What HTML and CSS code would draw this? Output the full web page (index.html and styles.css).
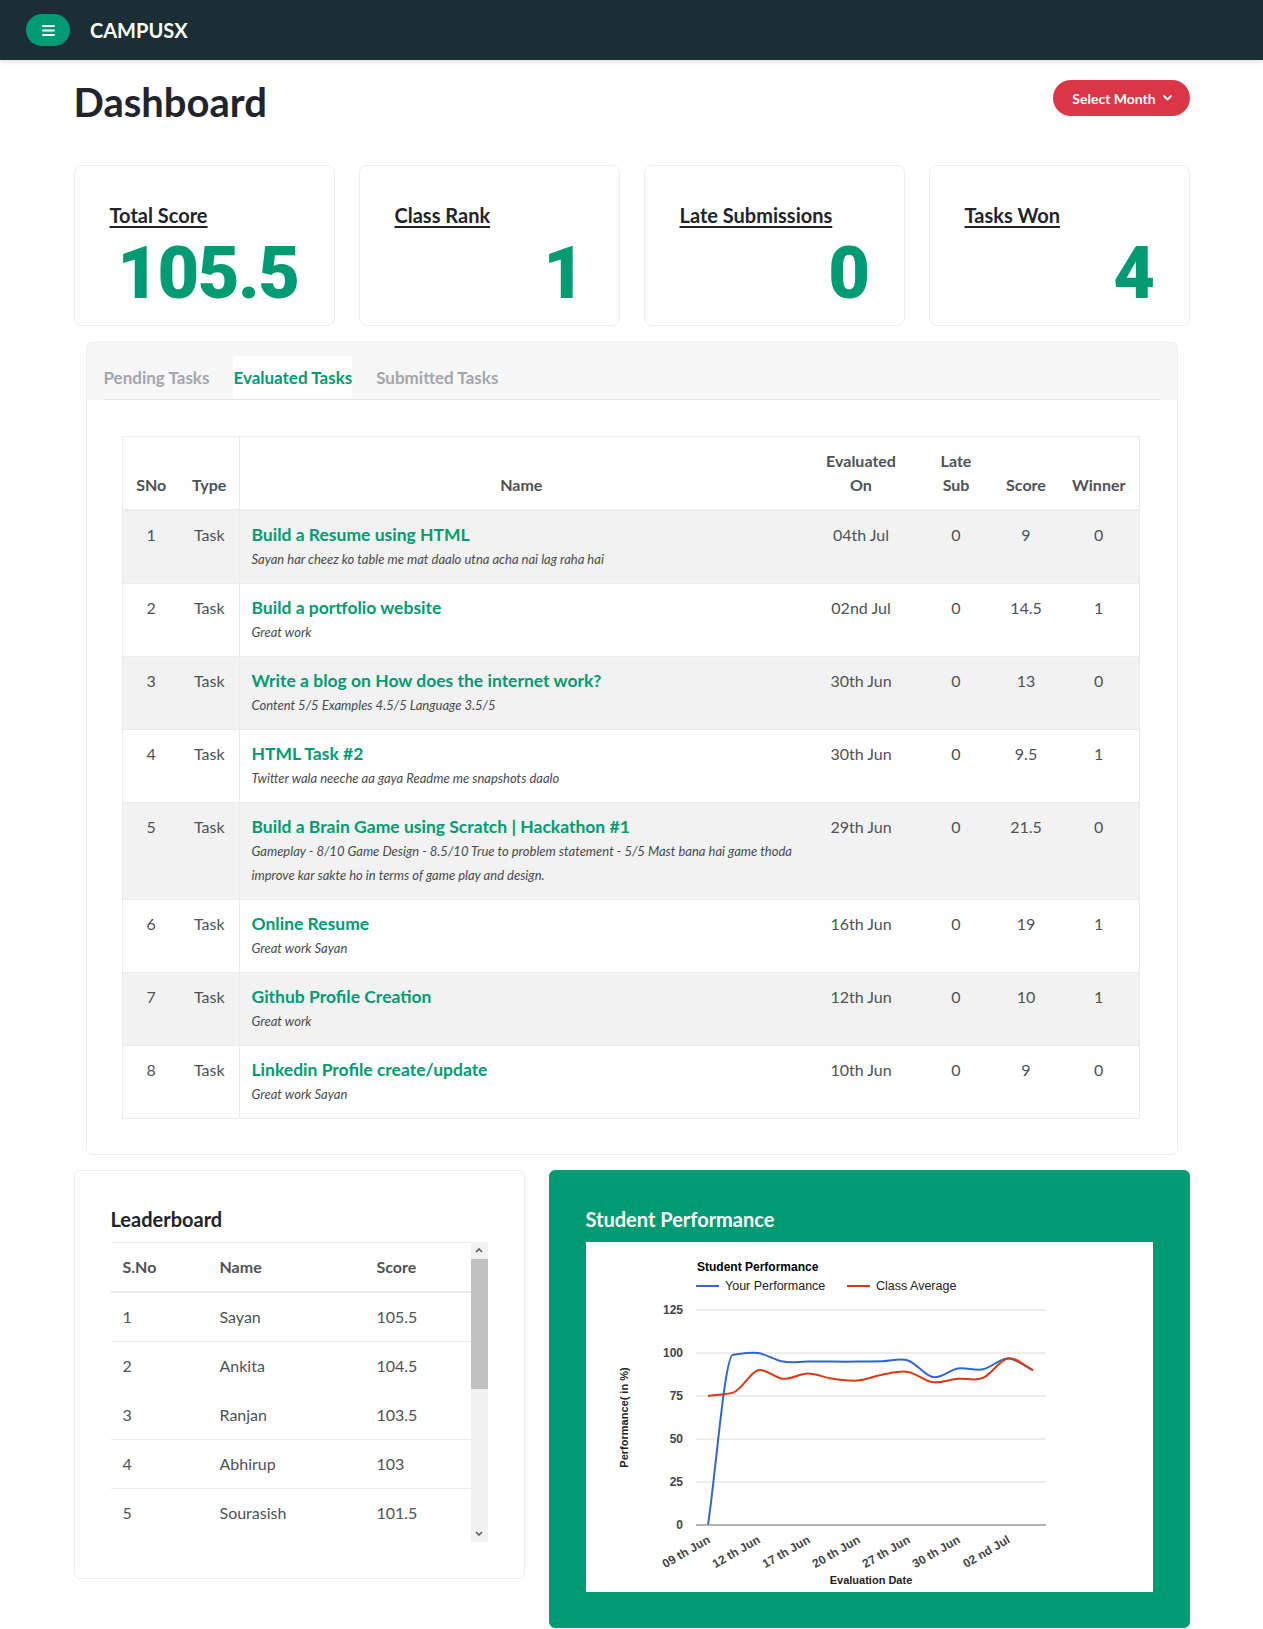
FILE: index.html
```html
<!DOCTYPE html>
<html lang="en">
<head>
<meta charset="utf-8">
<title>CampusX Dashboard</title>
<link rel="stylesheet" href="styles.css">
</head>
<body>
<nav class="topbar">
  <button class="menu-btn" aria-label="Menu">
    <svg width="13" height="11" viewBox="0 0 13 11"><rect x="0" y="0" width="13" height="2" rx="1" fill="#fff"/><rect x="0" y="4.5" width="13" height="2" rx="1" fill="#fff"/><rect x="0" y="9" width="13" height="2" rx="1" fill="#fff"/></svg>
  </button>
  <span class="brand">CAMPUSX</span>
</nav>

<main class="container">
  <div class="page-head">
    <h1 class="page-title">Dashboard</h1>
    <button class="month-btn">Select Month
      <svg width="9" height="6" viewBox="0 0 9 6"><polyline points="1,1 4.5,4.5 8,1" fill="none" stroke="#fff" stroke-width="1.8" stroke-linecap="round" stroke-linejoin="round"/></svg>
    </button>
  </div>

  <div class="stats">
    <div class="stat-card"><h5 class="stat-label">Total Score</h5><div class="stat-value">105.5</div></div>
    <div class="stat-card"><h5 class="stat-label">Class Rank</h5><div class="stat-value">1</div></div>
    <div class="stat-card"><h5 class="stat-label">Late Submissions</h5><div class="stat-value">0</div></div>
    <div class="stat-card"><h5 class="stat-label">Tasks Won</h5><div class="stat-value">4</div></div>
  </div>

  <section class="tasks-panel">
    <div class="tabs">
      <div class="tab-list">
        <span class="tab">Pending Tasks</span>
        <span class="tab active">Evaluated Tasks</span>
        <span class="tab">Submitted Tasks</span>
      </div>
    </div>
    <div class="panel-body">
      <table class="tasks">
        <colgroup>
          <col class="w-sno"><col class="w-type"><col class="w-name"><col class="w-eval"><col class="w-late"><col class="w-score"><col class="w-win">
        </colgroup>
        <thead>
          <tr><th>SNo</th><th class="col-type">Type</th><th>Name</th><th>Evaluated<br>On</th><th>Late<br>Sub</th><th>Score</th><th>Winner</th></tr>
        </thead>
        <tbody>
          <tr><td>1</td><td class="col-type">Task</td><td class="name"><div class="task-title">Build a Resume using HTML</div><div class="task-note">Sayan har cheez ko table me mat daalo utna acha nai lag raha hai</div></td><td>04th Jul</td><td>0</td><td>9</td><td>0</td></tr>
          <tr><td>2</td><td class="col-type">Task</td><td class="name"><div class="task-title">Build a portfolio website</div><div class="task-note">Great work</div></td><td>02nd Jul</td><td>0</td><td>14.5</td><td>1</td></tr>
          <tr><td>3</td><td class="col-type">Task</td><td class="name"><div class="task-title">Write a blog on How does the internet work?</div><div class="task-note">Content 5/5 Examples 4.5/5 Language 3.5/5</div></td><td>30th Jun</td><td>0</td><td>13</td><td>0</td></tr>
          <tr><td>4</td><td class="col-type">Task</td><td class="name"><div class="task-title">HTML Task #2</div><div class="task-note">Twitter wala neeche aa gaya Readme me snapshots daalo</div></td><td>30th Jun</td><td>0</td><td>9.5</td><td>1</td></tr>
          <tr><td>5</td><td class="col-type">Task</td><td class="name"><div class="task-title">Build a Brain Game using Scratch | Hackathon #1</div><div class="task-note">Gameplay - 8/10 Game Design - 8.5/10 True to problem statement - 5/5 Mast bana hai game thoda improve kar sakte ho in terms of game play and design.</div></td><td>29th Jun</td><td>0</td><td>21.5</td><td>0</td></tr>
          <tr><td>6</td><td class="col-type">Task</td><td class="name"><div class="task-title">Online Resume</div><div class="task-note">Great work Sayan</div></td><td>16th Jun</td><td>0</td><td>19</td><td>1</td></tr>
          <tr><td>7</td><td class="col-type">Task</td><td class="name"><div class="task-title">Github Profile Creation</div><div class="task-note">Great work</div></td><td>12th Jun</td><td>0</td><td>10</td><td>1</td></tr>
          <tr><td>8</td><td class="col-type">Task</td><td class="name"><div class="task-title">Linkedin Profile create/update</div><div class="task-note">Great work Sayan</div></td><td>10th Jun</td><td>0</td><td>9</td><td>0</td></tr>
        </tbody>
      </table>
    </div>
  </section>

  <div class="bottom-row">
    <section class="leader-card">
      <h5 class="card-title">Leaderboard</h5>
      <div class="leader-scroll">
        <div class="leader-wrap">
          <table class="leader-table">
            <colgroup><col class="lw-1"><col class="lw-2"><col></colgroup>
            <thead><tr><th>S.No</th><th>Name</th><th>Score</th></tr></thead>
            <tbody>
              <tr><td>1</td><td>Sayan</td><td>105.5</td></tr>
              <tr class="no-line"><td>2</td><td>Ankita</td><td>104.5</td></tr>
              <tr><td>3</td><td>Ranjan</td><td>103.5</td></tr>
              <tr><td>4</td><td>Abhirup</td><td>103</td></tr>
              <tr class="no-line"><td>5</td><td>Sourasish</td><td>101.5</td></tr>
            </tbody>
          </table>
        </div>
        <div class="scrollbar">
          <div class="sb-btn"><svg width="8" height="5" viewBox="0 0 8 5"><polyline points="1,4 4,1 7,4" fill="none" stroke="#505050" stroke-width="1.4"/></svg></div>
          <div class="sb-thumb"></div>
          <div class="sb-track"></div>
          <div class="sb-btn"><svg width="8" height="5" viewBox="0 0 8 5"><polyline points="1,1 4,4 7,1" fill="none" stroke="#505050" stroke-width="1.4"/></svg></div>
        </div>
      </div>
    </section>

    <section class="perf-card">
      <h5 class="card-title">Student Performance</h5>
      <div class="chart">
        <svg width="567" height="350" viewBox="0 0 567 350">
          <text class="ch-title" x="111" y="29">Student Performance</text>
          <line x1="110" y1="44" x2="133" y2="44" stroke="#3366cc" stroke-width="2"/>
          <text class="ch-legend" x="139" y="48">Your Performance</text>
          <line x1="261" y1="44" x2="284" y2="44" stroke="#dc3912" stroke-width="2"/>
          <text class="ch-legend" x="290" y="48">Class Average</text>

          <g stroke="#dcdcdc" stroke-width="1">
            <line x1="110" y1="68" x2="460" y2="68"/>
            <line x1="110" y1="111" x2="460" y2="111"/>
            <line x1="110" y1="154" x2="460" y2="154"/>
            <line x1="110" y1="197" x2="460" y2="197"/>
            <line x1="110" y1="240" x2="460" y2="240"/>
          </g>

          <g class="ch-axis" text-anchor="end">
            <text x="97" y="72">125</text>
            <text x="97" y="115">100</text>
            <text x="97" y="158">75</text>
            <text x="97" y="201">50</text>
            <text x="97" y="244">25</text>
            <text x="97" y="287">0</text>
          </g>

          <path d="M122,283 C130.3,226.2 138.7,113.7 147,112.7 C155.3,111.7 163.7,109.85 172,111 C180.3,112.15 188.7,118.17 197,119.6 C205.3,121.03 213.7,119.6 222,119.6 C230.3,119.6 238.7,119.6 247,119.6 C255.3,119.6 263.7,119.67 272,119.6 C280.3,119.53 288.7,119.38 297,119.2 C305.3,119.02 313.7,115.85 322,118.5 C330.3,121.15 338.7,133.77 347,135.1 C355.3,136.43 363.7,127.8 372,126.5 C380.3,125.2 388.7,128.98 397,127.3 C405.3,125.62 413.7,116.25 422,116.4 C430.3,116.55 438.7,124.27 447,128.2" fill="none" stroke="#3366cc" stroke-width="2"/>
          <path d="M122,154 C130.3,152.87 138.7,152.6 147,150.6 C155.3,148.6 163.7,130.5 172,128.2 C180.3,125.9 188.7,136.23 197,136.8 C205.3,137.37 213.7,131.6 222,131.6 C230.3,131.6 238.7,135.65 247,136.8 C255.3,137.95 263.7,139.22 272,138.5 C280.3,137.78 288.7,133.93 297,132.5 C305.3,131.07 313.7,128.62 322,129.9 C330.3,131.18 338.7,139.05 347,140.2 C355.3,141.35 363.7,137.52 372,136.8 C380.3,136.08 388.7,139.3 397,135.9 C405.3,132.5 413.7,117.68 422,116.4 C430.3,115.12 438.7,124.27 447,128.2" fill="none" stroke="#dc3912" stroke-width="2"/>

          <line x1="110" y1="283" x2="460" y2="283" stroke="#9a9a9a" stroke-width="1.6"/>

          <g class="ch-axis" text-anchor="end">
            <text x="125" y="300" transform="rotate(-30 125 300)">09 th Jun</text>
            <text x="175" y="300" transform="rotate(-30 175 300)">12 th Jun</text>
            <text x="225" y="300" transform="rotate(-30 225 300)">17 th Jun</text>
            <text x="275" y="300" transform="rotate(-30 275 300)">20 th Jun</text>
            <text x="325" y="300" transform="rotate(-30 325 300)">27 th Jun</text>
            <text x="375" y="300" transform="rotate(-30 375 300)">30 th Jun</text>
            <text x="425" y="300" transform="rotate(-30 425 300)">02 nd Jul</text>
          </g>

          <text class="ch-axis-title" x="285" y="342" text-anchor="middle">Evaluation Date</text>
          <text class="ch-axis-title" text-anchor="middle" transform="translate(42 175.5) rotate(-90)">Performance( in %)</text>
        </svg>
      </div>
    </section>
  </div>
</main>
</body>
</html>
```

FILE: styles.css
```css
* { box-sizing: border-box; }

body {
  margin: 0;
  background: #ffffff;
  color: #212529;
  font-family: Lato, "Noto Sans", "DejaVu Sans", sans-serif;
}

/* top bar */
.topbar {
  height: 60px;
  background: #1b2d35;
  display: flex;
  align-items: center;
  gap: 20px;
  padding-left: 26px;
  box-shadow: 0 2px 4px rgba(0, 0, 0, 0.12);
}
.menu-btn {
  width: 44px;
  height: 32px;
  border: 0;
  padding: 0;
  border-radius: 16px;
  background: #009b72;
  display: flex;
  align-items: center;
  justify-content: center;
}
.menu-btn svg { display: block; }
.brand {
  color: #ffffff;
  font-size: 20px;
  line-height: 24px;
  font-weight: 700;
}

/* page */
.container {
  width: 1116px;
  margin: 0 auto;
}
.page-head {
  display: flex;
  justify-content: space-between;
  align-items: flex-start;
  padding-top: 18px;
}
.page-title {
  margin: 0;
  font-size: 40px;
  line-height: 48px;
  font-weight: 700;
  color: #212529;
}
.month-btn {
  margin-top: 2px;
  width: 137px;
  height: 36px;
  border: 0;
  padding: 0 0 0 2px;
  border-radius: 18px;
  background: #dc3545;
  color: #ffffff;
  font-family: Lato, "Noto Sans", sans-serif;
  font-size: 14px;
  font-weight: 700;
  display: flex;
  align-items: center;
  justify-content: center;
  gap: 7px;
}
.month-btn svg { display: block; }

/* stat cards */
.stats {
  display: grid;
  grid-template-columns: repeat(4, 1fr);
  gap: 24px;
  margin-top: 39px;
}
.stat-card {
  border: 1px solid #eceef1;
  border-radius: 8px;
  padding: 37px 35px 15px;
}
.stat-label {
  margin: 0 0 11px;
  font-size: 20px;
  line-height: 24px;
  font-weight: 700;
  color: #212529;
  text-decoration: underline;
  text-decoration-thickness: 1.5px;
  text-underline-offset: 3px;
}
.stat-value {
  font-family: Roboto, Inter, "Liberation Sans", sans-serif;
  font-weight: 900;
  font-size: 72px;
  line-height: 72px;
  color: #009b72;
  text-align: right;
  letter-spacing: -1.5px;
}

/* tasks panel */
.tasks-panel {
  margin: 16px 12px 0;
  border: 1px solid #eceef1;
  border-radius: 6px;
  overflow: hidden;
}
.tabs {
  background: #f7f7f7;
  padding: 13px 17px 0;
}
.tab-list {
  display: flex;
  gap: 24px;
  border-bottom: 1px solid #e2e5e8;
}
.tab {
  padding: 12px 0;
  font-size: 17px;
  line-height: 19px;
  font-weight: 700;
  color: #a3a6aa;
}
.tab.active {
  background: #ffffff;
  color: #009b72;
}
.panel-body {
  padding: 36px 37px 35px 35px;
}

.tasks {
  width: 100%;
  border-collapse: collapse;
  table-layout: fixed;
  border: 1px solid #e9ebee;
  color: #4d5257;
}
.w-sno { width: 58px; }
.w-type { width: 59px; }
.w-eval { width: 116px; }
.w-late { width: 74px; }
.w-score { width: 66px; }
.w-win { width: 80px; }
.tasks th {
  padding: 12px;
  font-size: 16px;
  line-height: 24px;
  font-weight: 700;
  text-align: center;
  vertical-align: bottom;
  border-bottom: 2px solid #ebedf0;
}
.tasks td {
  padding: 12px;
  font-size: 16px;
  line-height: 24px;
  text-align: center;
  vertical-align: top;
  border-top: 1px solid #e9ebee;
}
.tasks tbody tr:nth-child(odd) td { background: #f2f2f2; }
.tasks .col-type { border-right: 1px solid #e9ebee; }
.tasks td.name {
  text-align: left;
  padding-right: 2px;
}
.task-title {
  font-size: 17.5px;
  font-weight: 700;
  color: #009b72;
}
.task-note {
  font-size: 13px;
  font-style: italic;
  color: #464b50;
}

/* bottom row */
.bottom-row {
  display: grid;
  grid-template-columns: 451px 641px;
  gap: 24px;
  margin-top: 15px;
  align-items: start;
}
.card-title {
  margin: 0 0 11px;
  font-size: 20px;
  line-height: 24px;
  font-weight: 700;
  color: #212529;
}

.leader-card {
  border: 1px solid #eceef1;
  border-radius: 6px;
  padding: 36px;
}
.leader-scroll {
  display: flex;
  height: 300px;
}
.leader-wrap {
  flex: 1;
  overflow: hidden;
}
.leader-table {
  width: 100%;
  border-collapse: collapse;
  table-layout: fixed;
  color: #4d5257;
  font-size: 16px;
  line-height: 24px;
}
.lw-1 { width: 97px; }
.lw-2 { width: 157px; }
.leader-table th {
  padding: 12px;
  text-align: left;
  font-weight: 700;
  border-top: 1px solid #e9ecef;
  border-bottom: 2px solid #e9ecef;
}
.leader-table td {
  padding: 12px;
  text-align: left;
  border-bottom: 1px solid #e9ecef;
}
.leader-table tr.no-line td { border-bottom-color: transparent; }

.scrollbar {
  width: 17px;
  background: #f1f1f1;
  display: flex;
  flex-direction: column;
}
.sb-btn {
  height: 17px;
  display: flex;
  align-items: center;
  justify-content: center;
}
.sb-btn svg { display: block; }
.sb-thumb {
  height: 130px;
  background: #c1c1c1;
}
.sb-track { flex: 1; }

.perf-card {
  background: #009b72;
  border: 1px solid #0a9e76;
  border-radius: 6px;
  padding: 36px 36px 35px;
}
.perf-card .card-title { color: #ffffff; }
.chart {
  background: #ffffff;
  height: 350px;
}
.chart svg { display: block; }

.ch-title {
  font-family: "Liberation Sans", Arial, sans-serif;
  font-size: 12px;
  font-weight: 700;
  fill: #000000;
}
.ch-legend {
  font-family: "Liberation Sans", Arial, sans-serif;
  font-size: 12.5px;
  fill: #222222;
}
.ch-axis {
  font-family: "Liberation Sans", Arial, sans-serif;
  font-size: 12px;
  font-weight: 700;
  fill: #444444;
}
.ch-axis-title {
  font-family: "Liberation Sans", Arial, sans-serif;
  font-size: 11px;
  font-weight: 700;
  fill: #222222;
}
```
